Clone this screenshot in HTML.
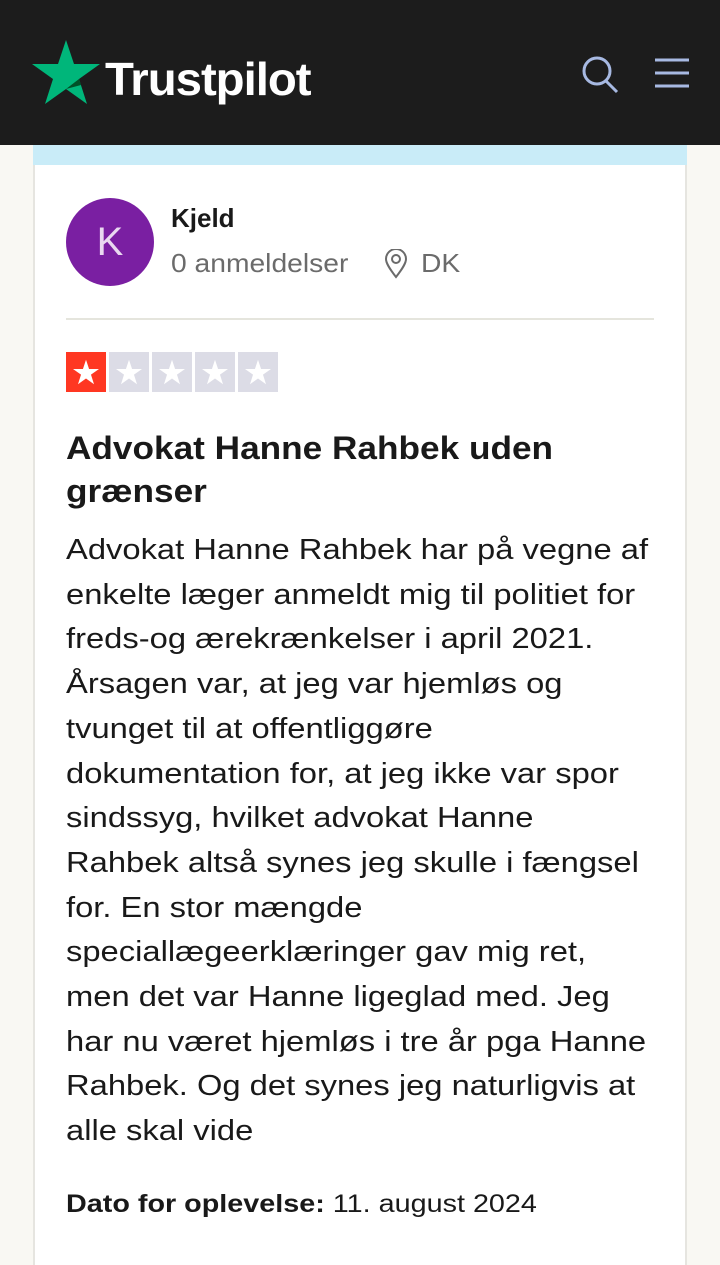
<!DOCTYPE html>
<html><head><meta charset="utf-8"><style>
*{margin:0;padding:0;box-sizing:border-box}
body{width:720px;height:1255px;overflow:hidden;background:#f9f8f3;font-family:"Liberation Sans",sans-serif;position:relative}
.hdr{position:absolute;left:0;top:0;width:720px;height:145px;background:#1c1c1c}
.logo{position:absolute;left:105px;top:52px;color:#fff;font-size:46px;font-weight:bold;letter-spacing:-1px;transform:scaleX(1.03);transform-origin:left}
.strip{position:absolute;left:33px;top:145px;width:654px;height:20px;background:#c9ecf8}
.card{position:absolute;left:33px;top:165px;width:654px;height:1100px;background:#fff;border-left:2px solid #e6e5e0;border-right:2px solid #e6e5e0}
.av{position:absolute;left:66px;top:198px;width:88px;height:88px;border-radius:50%;background:#7a1fa2;color:#e9d8f0;font-size:40px;text-align:center;line-height:88px}
.name{position:absolute;left:171px;top:203px;font-size:26px;font-weight:bold;color:#191919}
.meta{position:absolute;left:171px;top:248px;font-size:26px;color:#6b6b6b;transform:scaleX(1.086);transform-origin:left}
.dk{position:absolute;left:421px;top:248px;font-size:26px;color:#6b6b6b;transform:scaleX(1.086);transform-origin:left}
.hr{position:absolute;left:66px;top:318px;width:588px;height:2px;background:#e5e5dd}
.stars{position:absolute;left:66px;top:352px;display:flex;gap:3px}
.s{width:40px;height:40px;background:#dcdce6;display:flex;align-items:center;justify-content:center}
.s.r{background:#ff3722}
.title{position:absolute;left:66px;top:427px;font-size:32px;font-weight:bold;color:#191919;line-height:43px;white-space:nowrap;transform:scaleX(1.1);transform-origin:left}
.body{position:absolute;left:66px;top:528px;font-size:28.5px;color:#191919;line-height:44.7px;white-space:nowrap;transform:scaleX(1.148);transform-origin:left}
.date{position:absolute;left:66px;top:1190px;font-size:25px;color:#191919;white-space:nowrap;transform:scaleX(1.15);transform-origin:left}
</style></head><body>
<div class="hdr">
<svg style="position:absolute;left:32px;top:40px" width="68" height="64" viewBox="0 0 68 64"><polygon points="34,0 42,24 68,24 47,39 55,64 34,49 13,64 21,39 0,24 26,24" fill="#00b67a"/><polygon points="47,39 49,45 34,49" fill="#005128"/></svg>
<div class="logo">Trustpilot</div>
<svg style="position:absolute;left:580px;top:54px" width="40" height="40" viewBox="0 0 40 40"><circle cx="17" cy="17" r="13" fill="none" stroke="#a7b9e2" stroke-width="3"/><line x1="26" y1="27" x2="37" y2="38" stroke="#a7b9e2" stroke-width="3"/></svg>
<svg style="position:absolute;left:655px;top:58px" width="34" height="30" viewBox="0 0 34 30"><g stroke="#a7b9e2" stroke-width="3"><line x1="0" y1="2" x2="34" y2="2"/><line x1="0" y1="15" x2="34" y2="15"/><line x1="0" y1="28" x2="34" y2="28"/></g></svg>
</div>
<div class="strip"></div>
<div class="card"></div>
<div class="av">K</div>
<div class="name">Kjeld</div>
<div class="meta">0 anmeldelser</div>
<svg style="position:absolute;left:383px;top:249px" width="26" height="30" viewBox="0 0 26 30"><path d="M13 28C6 19 3 14 3 10a10 10 0 0 1 20 0c0 4-3 9-10 18z" fill="none" stroke="#6b6b6b" stroke-width="2"/><circle cx="13" cy="10" r="4" fill="none" stroke="#6b6b6b" stroke-width="2"/></svg>
<div class="dk">DK</div>
<div class="hr"></div>
<div class="stars">
<div class="s r"><svg width="26" height="26" viewBox="0 0 68 64"><polygon points="34,0 42,24 68,24 47,39 55,64 34,49 13,64 21,39 0,24 26,24" fill="#fff"/></svg></div>
<div class="s"><svg width="26" height="26" viewBox="0 0 68 64"><polygon points="34,0 42,24 68,24 47,39 55,64 34,49 13,64 21,39 0,24 26,24" fill="#fff"/></svg></div>
<div class="s"><svg width="26" height="26" viewBox="0 0 68 64"><polygon points="34,0 42,24 68,24 47,39 55,64 34,49 13,64 21,39 0,24 26,24" fill="#fff"/></svg></div>
<div class="s"><svg width="26" height="26" viewBox="0 0 68 64"><polygon points="34,0 42,24 68,24 47,39 55,64 34,49 13,64 21,39 0,24 26,24" fill="#fff"/></svg></div>
<div class="s"><svg width="26" height="26" viewBox="0 0 68 64"><polygon points="34,0 42,24 68,24 47,39 55,64 34,49 13,64 21,39 0,24 26,24" fill="#fff"/></svg></div>
</div>
<div class="title">Advokat Hanne Rahbek uden<br>grænser</div>
<div class="body">Advokat Hanne Rahbek har på vegne af<br>enkelte læger anmeldt mig til politiet for<br>freds-og ærekrænkelser i april 2021.<br>Årsagen var, at jeg var hjemløs og<br>tvunget til at offentliggøre<br>dokumentation for, at jeg ikke var spor<br>sindssyg, hvilket advokat Hanne<br>Rahbek altså synes jeg skulle i fængsel<br>for. En stor mængde<br>speciallægeerklæringer gav mig ret,<br>men det var Hanne ligeglad med. Jeg<br>har nu været hjemløs i tre år pga Hanne<br>Rahbek. Og det synes jeg naturligvis at<br>alle skal vide</div>
<div class="date"><b>Dato for oplevelse:</b> 11. august 2024</div>
</body></html>
